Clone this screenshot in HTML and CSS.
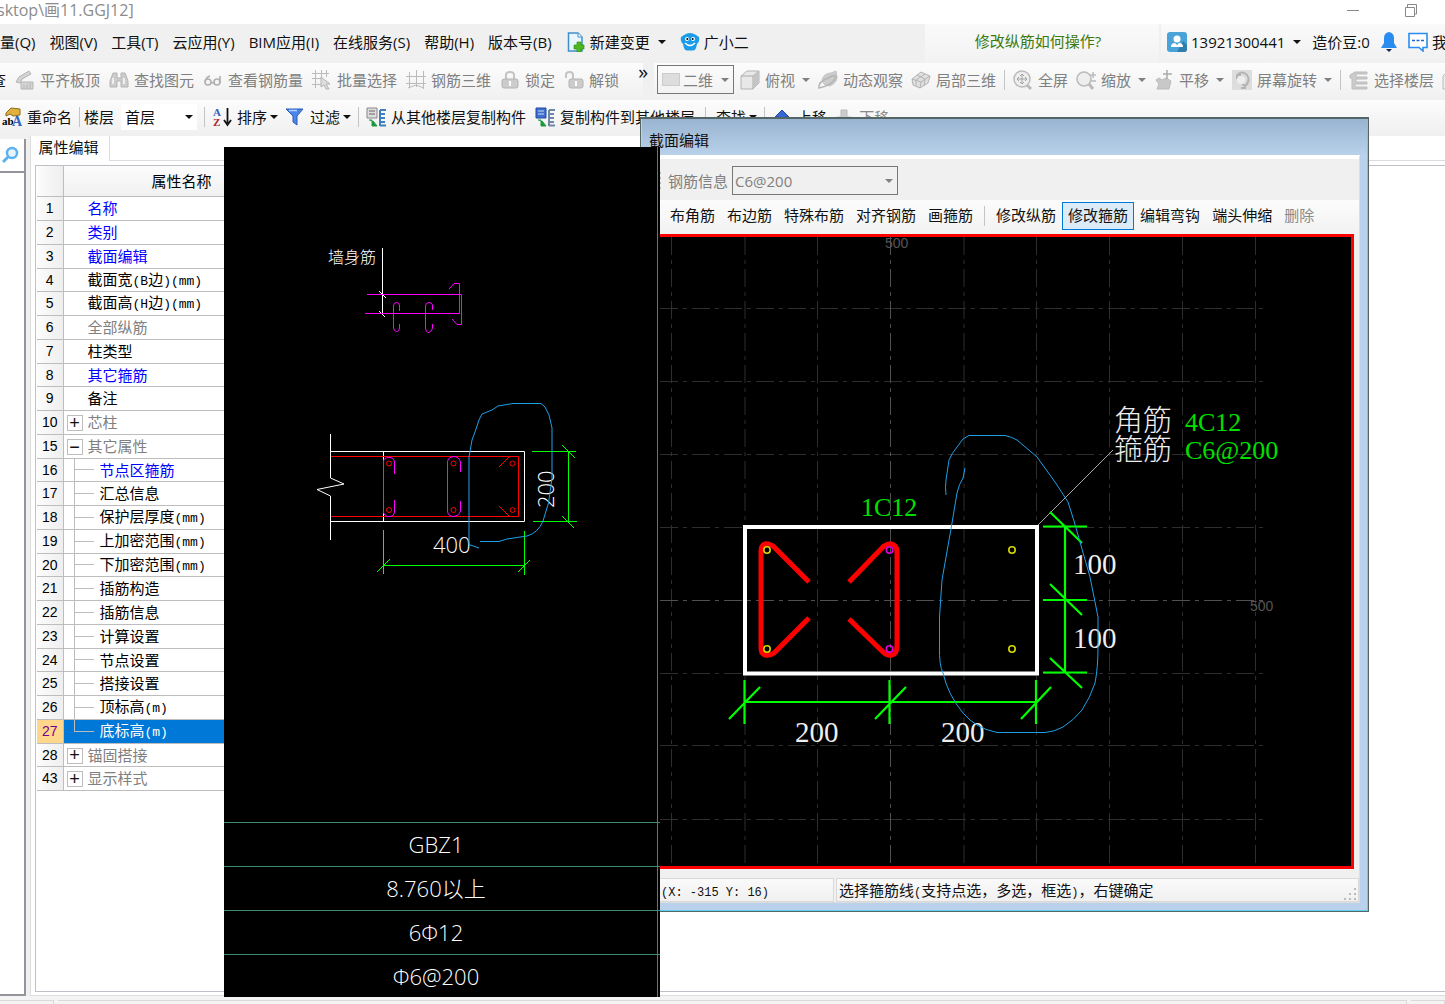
FILE: index.html
```html
<!DOCTYPE html>
<html lang="zh-CN">
<head>
<meta charset="utf-8">
<title>画11.GGJ12</title>
<link rel="stylesheet" href="styles.css">
</head>
<body>
<div class="app">
  <header class="titlebar">
    <span class="doc-title">sktop\画11.GGJ12]</span>
    <div class="win-buttons">
      <button aria-label="最小化"><svg width="14" height="14" viewBox="0 0 14 14"><path d="M1 7.5H13" stroke="#888"/></svg></button>
      <button aria-label="还原"><svg width="14" height="14" viewBox="0 0 14 14"><path d="M1.500 4.500H10.500V13.500H1.500ZM3.500 4V1.500H12.500V11H11" fill="none" stroke="#888"/></svg></button>
    </div>
  </header>

  <nav class="menubar">
    <div class="menu-items">
      <button>量(Q)</button><button>视图(V)</button><button>工具(T)</button><button>云应用(Y)</button><button>BIM应用(I)</button><button>在线服务(S)</button><button>帮助(H)</button><button>版本号(B)</button>
      <button class="ib"><svg width="20" height="20" viewBox="0 0 20 20"><path d="M2.500 1H12l4 4v14H2.500Z" fill="#eaf6ff" stroke="#3d8fca" stroke-width="1.500"/><path d="M12 1v4h4" fill="#fff" stroke="#3d8fca"/><path d="M11 10h4v3h3v4h-3v3h-4v-3H8v-4h3Z" fill="#4fb81f" stroke="#2f8f10" stroke-width=".7"/></svg>新建变更<i class="arr"></i></button>
      <button class="ib"><svg width="20" height="20" viewBox="0 0 20 20"><path d="M4 3Q10-1 16 3L19 5Q20 10 17 12L16 16Q15 19 12 18.500H8Q5 19 4 16L3 12Q0 10 1 5Z" fill="#1b9cea"/><circle cx="7" cy="7" r="2" fill="#fff"/><circle cx="13" cy="7" r="2" fill="#fff"/><circle cx="7.300" cy="7" r="1"/><circle cx="12.700" cy="7" r="1"/><path d="M5 11Q10 16 15 11" fill="none" stroke="#fff" stroke-width="1.500"/></svg>广小二</button>
    </div>
    <a class="tip" href="#help">修改纵筋如何操作?</a>
    <div class="account">
      <button class="ib"><svg width="20" height="20" viewBox="0 0 20 20"><rect width="20" height="20" rx="3" fill="#4aa3d8"/><path d="M10 20L16 9L20 13V17Q20 20 17 20Z" fill="#2f7dad"/><circle cx="10" cy="7" r="3.500" fill="#fff"/><path d="M4 15Q4 11 8 11L10 13L12 11Q16 11 16 15Z" fill="#fff"/></svg>13921300441<i class="arr"></i></button>
      <span class="beans">造价豆:0</span>
      <button aria-label="通知"><svg width="16" height="20" viewBox="0 0 16 20"><path d="M8 0Q13 1 13 6V11L16 16H0L3 11V6Q3 1 8 0Z" fill="#2b8cf0"/><path d="M5 17H11L8 20Z" fill="#125"/></svg></button>
      <button class="ib"><svg width="20" height="20" viewBox="0 0 20 20"><path d="M1 1.500H19V15.500H15V19L11 15.500H1Z" fill="#fff" stroke="#2b8cf0" stroke-width="1.600"/><path d="M4 8.500H16" stroke="#26c" stroke-width="1.500" stroke-dasharray="3 1.500"/></svg>我</button>
    </div>
  </nav>

  <div class="bars">
    <div class="toolbar dim edit-bar">
      <button class="on">查</button>
      <button><svg width="20" height="20" viewBox="0 0 20 20"><path d="M1 12L4 7L14 1L16 4L7 9L5 13ZM6 12H18V19H6ZM9 19V15M12 19V14M15 19V13" fill="#d4d4d4" stroke="#b4b4b4"/></svg>平齐板顶</button>
      <button><svg width="20" height="20" viewBox="0 0 20 20"><path d="M4 3H8V8H12V3H16L19 11V17H12V11H8V17H1V11Z" fill="#ccc" stroke="#b4b4b4"/><path d="M4 8V14M15 8V14" stroke="#eee" stroke-width="2"/></svg>查找图元</button>
      <button><svg width="20" height="20" viewBox="0 0 20 20"><g fill="none" stroke="#b0b0b0" stroke-width="1.600"><circle cx="5" cy="12" r="3"/><circle cx="14" cy="12" r="3"/><path d="M2 12Q3 7 7 6M8 12Q10 14 11 12M17 13V6"/></g></svg>查看钢筋量</button>
      <button><svg width="20" height="20" viewBox="0 0 20 20"><path d="M0 3.500H17M0 8.500H9M0 14.500H9M3.500 0V18M9.500 0V8M14.500 0V7" stroke="#bbb"/><path d="M9 7L18 14L14 14L17 19L14 19L12 15L9 17Z" fill="#ddd" stroke="#b4b4b4"/></svg>批量选择</button>
      <button><svg width="20" height="20" viewBox="0 0 20 20"><path d="M3.500 2V18M10.500 0V17M17.500 1V19M0 6.500H20M0 13.500H20M2 18L10 15L18 18" stroke="#bbb" fill="none"/></svg>钢筋三维</button>
      <button><svg width="20" height="20" viewBox="0 0 20 20"><path d="M6 9V5Q6 2 10 2T14 5V9" fill="none" stroke="#c4c4c4" stroke-width="2"/><rect x="2" y="9" width="16" height="9" rx="2" fill="#ccc" stroke="#b4b4b4"/><path d="M10 11V16" stroke="#fff" stroke-width="2"/></svg>锁定</button>
      <button><svg width="20" height="20" viewBox="0 0 20 20"><path d="M2 8V5Q2 2 5.500 2T9 5V9" fill="none" stroke="#c4c4c4" stroke-width="2"/><rect x="5" y="9" width="14" height="9" rx="2" fill="#ccc" stroke="#b4b4b4"/><path d="M12 11V16" stroke="#fff" stroke-width="2"/></svg>解锁</button>
      <button class="more" aria-label="更多">»</button>
    </div>
    <div class="toolbar dim view-bar">
      <label class="combo mode"><svg width="18" height="14" viewBox="0 0 18 14"><rect x=".5" y=".5" width="17" height="12" fill="#ddd" stroke="#ccc"/></svg><select aria-label="视图模式"><option>二维</option></select><i class="arr"></i></label>
      <button><svg width="20" height="20" viewBox="0 0 20 20"><path d="M1 6L7 1H19V13L13 19H1Z" fill="#e8e8e8" stroke="#b4b4b4"/><path d="M1 6H13V19M13 6L19 1" fill="none" stroke="#aaa"/><path d="M13 6L19 1V13L13 19Z" fill="#c4c4c4"/></svg>俯视<i class="arr"></i></button>
      <button><svg width="20" height="20" viewBox="0 0 20 20"><path d="M4 10Q6 3 13 3L18 1L19 7Q19 13 12 16L6 14Z" fill="#ccc" stroke="#c4c4c4"/><path d="M1 18Q0 12 10 8Q20 3 17 9Q12 16 1 18Z" fill="none" stroke="#b4b4b4" stroke-width="1.500"/></svg>动态观察</button>
      <button><svg width="20" height="20" viewBox="0 0 20 20"><path d="M1 9L10 2L19 6L17 13L9 18L2 15Z" fill="#e0e0e0" stroke="#b4b4b4"/><path d="M1 9L10 12L19 6M10 12L9 18M6 5L14 9L13 16M14 4L5 10V16" fill="none" stroke="#b4b4b4"/></svg>局部三维</button>
      <i class="sep"></i>
      <button><svg width="20" height="20" viewBox="0 0 20 20"><circle cx="9" cy="9" r="8" fill="#eee" stroke="#bbb" stroke-width="1.500"/><path d="M9 4V14M4 9H14M7 6L9 4L11 6M7 12L9 14L11 12M6 7L4 9L6 11M12 7L14 9L12 11" fill="none" stroke="#a4a4a4"/><path d="M14 15L18 19" stroke="#bbb" stroke-width="3"/></svg>全屏</button>
      <button><svg width="20" height="20" viewBox="0 0 20 20"><circle cx="8" cy="9" r="7" fill="#eee" stroke="#bbb" stroke-width="1.500"/><path d="M13 14L17 19" stroke="#bbb" stroke-width="3"/><path d="M17 2V8M14 5H20M14 11H20" stroke="#bbb" stroke-width="1.500"/></svg>缩放<i class="arr"></i></button>
      <button><svg width="20" height="20" viewBox="0 0 20 20"><path d="M3 19L5 14L2 10L5 8L8 10L12 8L17 11L15 19Z" fill="#c8c8c8" stroke="#bbb"/><path d="M13 0V9M9 4H18" stroke="#aaa" stroke-width="1.500"/></svg>平移<i class="arr"></i></button>
      <button><svg width="20" height="20" viewBox="0 0 20 20"><rect width="20" height="20" fill="#ddd"/><path d="M5 5Q10 0 15 5Q19 11 13 16L10 14M5 5V9M5 5H9M13 16V18H9" fill="none" stroke="#b4b4b4" stroke-width="2"/><circle cx="9" cy="10" r="4" fill="#eee"/></svg>屏幕旋转<i class="arr"></i></button>
      <i class="sep"></i>
      <button><svg width="20" height="20" viewBox="0 0 20 20"><path d="M1 5L6 2H18V4H7V7H18V9H7V12H18V14H6V17H18V19H3V8H1Z" fill="#ccc" stroke="#bbb"/></svg>选择楼层</button>
      <button aria-label="楼层"><svg width="20" height="20" viewBox="0 0 20 20"><path d="M1 6L6 1H19V19H1Z" fill="#eee" stroke="#bbb"/></svg></button>
    </div>
  </div>

  <div class="toolbar comp-bar">
    <button><svg width="20" height="20" viewBox="0 0 20 20"><path d="M4 6L9 1L18 2V8L11 9L8 7L4 9Z" fill="#e0b23c" stroke="#8a6a20"/><text x="0" y="18" font-size="11" class="sv">ab</text><text x="10" y="19" font-size="14" class="sv blue">A</text></svg>重命名</button>
    <i class="sep"></i>
    <label class="floor" for="floor">楼层</label>
    <span class="combo floors"><select id="floor"><option>首层</option></select><i class="arr"></i></span>
    <i class="sep"></i>
    <button><svg width="20" height="20" viewBox="0 0 20 20"><text x="1" y="9" font-size="11" class="sv blue">A</text><text x="1" y="19" font-size="11" class="sv red">Z</text><path d="M15.500 1V16M12 13L15.500 18L19 13" fill="none" stroke="#111" stroke-width="1.800"/></svg>排序<i class="arr"></i></button>
    <button><svg width="20" height="20" viewBox="0 0 20 20"><path d="M1 2H18L12 9V18L8 15V9Z" fill="#4a86e8" stroke="#2a5cb8"/><path d="M4 3.500H12" stroke="#b5d2ff" stroke-width="1.500"/></svg>过滤<i class="arr"></i></button>
    <i class="sep"></i>
    <button><svg width="20" height="20" viewBox="0 0 20 20"><path d="M1 1H11V11H1Z" fill="#ddd" stroke="#888"/><path d="M3 4H9M3 7H9" stroke="#666"/><path d="M3 13H6V19H11L7 14" fill="#1a9a3c" stroke="#1a9a3c"/><path d="M14 3V19M14 3H20M14 7H19M14 11H19M14 15H19M14 18.500H20" stroke="#3f7fc0" stroke-width="2"/></svg>从其他楼层复制构件</button>
    <button class="copy-to"><svg width="20" height="20" viewBox="0 0 20 20"><path d="M1 1H11V11H1Z" fill="#3d6fd0" stroke="#2448a0"/><path d="M3 4H9M3 7H9" stroke="#cde"/><path d="M3 13H6V19H11L7 14" fill="#1a9a3c" stroke="#1a9a3c"/><path d="M14 3V19M14 3H20M14 7H19M14 11H19M14 15H19M14 18.500H20" stroke="#6d87a5" stroke-width="2"/></svg>复制构件到其他楼层</button>
    <i class="sep roomy"></i>
    <button>查找<i class="arr"></i></button>
    <i class="sep"></i>
    <button><svg width="20" height="20" viewBox="0 0 20 20"><path d="M10 3L17 10H13V17H7V10H3Z" fill="#3568d4" stroke="#24489c"/></svg>上移</button>
    <button class="off"><svg width="20" height="20" viewBox="0 0 20 20"><path d="M10 17L17 10H13V3H7V10H3Z" fill="#ccc" stroke="#bbb"/></svg>下移</button>
  </div>

  <main class="work">
    <aside class="side">
      <button class="search" aria-label="搜索"><svg width="18" height="18" viewBox="0 0 18 18"><circle cx="11" cy="7" r="5" fill="#e6f5ff" stroke="#5cb2ee" stroke-width="2.500"/><path d="M7 11L2 16" stroke="#5cb2ee" stroke-width="3"/></svg></button>
      <div class="side-body"></div>
    </aside>
    <section class="props">
      <div class="tabs"><button class="tab">属性编辑</button><span class="tab-rest"></span></div>
      <div class="grid-wrap">
        <table class="grid">
          <thead><tr><th class="no"></th><th class="head">属性名称</th></tr></thead>
          <tbody>
            <tr><th>1</th><td class="key">名称</td></tr>
            <tr><th>2</th><td class="key">类别</td></tr>
            <tr><th>3</th><td class="key">截面编辑</td></tr>
            <tr><th>4</th><td>截面宽<span class="hw">(B</span>边<span class="hw">)(mm)</span></td></tr>
            <tr><th>5</th><td>截面高<span class="hw">(H</span>边<span class="hw">)(mm)</span></td></tr>
            <tr><th>6</th><td class="gray">全部纵筋</td></tr>
            <tr><th>7</th><td>柱类型</td></tr>
            <tr><th>8</th><td class="key">其它箍筋</td></tr>
            <tr><th>9</th><td>备注</td></tr>
            <tr><th>10</th><td class="gray group"><button class="exp" aria-label="展开">+</button>芯柱</td></tr>
            <tr><th>15</th><td class="gray group"><button class="exp" aria-label="折叠">−</button>其它属性</td></tr>
            <tr><th>16</th><td class="sub key">节点区箍筋</td></tr>
            <tr><th>17</th><td class="sub">汇总信息</td></tr>
            <tr><th>18</th><td class="sub">保护层厚度<span class="hw">(mm)</span></td></tr>
            <tr><th>19</th><td class="sub">上加密范围<span class="hw">(mm)</span></td></tr>
            <tr><th>20</th><td class="sub">下加密范围<span class="hw">(mm)</span></td></tr>
            <tr><th>21</th><td class="sub">插筋构造</td></tr>
            <tr><th>22</th><td class="sub">插筋信息</td></tr>
            <tr><th>23</th><td class="sub">计算设置</td></tr>
            <tr><th>24</th><td class="sub">节点设置</td></tr>
            <tr><th>25</th><td class="sub">搭接设置</td></tr>
            <tr><th>26</th><td class="sub">顶标高<span class="hw">(m)</span></td></tr>
            <tr class="selected"><th>27</th><td class="sub last">底标高<span class="hw">(m)</span></td></tr>
            <tr><th>28</th><td class="gray group"><button class="exp" aria-label="展开">+</button>锚固搭接</td></tr>
            <tr><th>43</th><td class="gray group"><button class="exp" aria-label="展开">+</button>显示样式</td></tr>
          </tbody>
        </table>
      </div>
    </section>
  </main>
  <footer class="status"><span class="cell first"></span><span class="cell grow"></span><span class="cell end"></span></footer>
</div>

<section class="dialog" aria-label="截面编辑">
  <h2 class="dlg-title">截面编辑</h2>
  <div class="dlg-body">
    <div class="dlg-info">
      <i class="grip"></i>
      <label for="rebar">钢筋信息</label>
      <span class="combo rebar"><select id="rebar"><option>C6@200</option></select><i class="arr"></i></span>
    </div>
    <div class="dlg-tools">
      <i class="grip"></i>
      <button>布角筋</button><button>布边筋</button><button>特殊布筋</button><button>对齐钢筋</button><button>画箍筋</button><i class="sep"></i><button>修改纵筋</button><button class="pressed">修改箍筋</button><button>编辑弯钩</button><button>端头伸缩</button><button class="off">删除</button>
    </div>
    <svg class="canvas" viewBox="651 237 700 629" preserveAspectRatio="xMinYMin">
      <g class="grid-lines">
        <path d="M671.500 237V866M745 237V866M817.500 237V866M964 237V866M1036.500 237V866M1109.500 237V866M1182.500 237V866M1255.500 237V866"/>
        <path d="M660 308.500H1267M660 381.500H1267M660 454.500H1267M660 527.500H1267M660 673.500H1267M660 745.500H1267M660 819.500H1267"/>
        <path class="axis" d="M890.500 237V866M660 600.500H1267"/>
      </g>
      <text class="scale" x="885" y="248">500</text>
      <text class="scale" x="1250" y="611">500</text>
      <path d="M1037 526L1113 450" stroke="#aaa"/>
      <rect x="745" y="527" width="292" height="146.500" fill="none" stroke="#fff" stroke-width="4"/>
      <g fill="none" stroke="#f00" stroke-width="5">
        <path d="M809 582L773 546Q767 542 763 545Q761 547 761 550V648Q761 654 765 655Q770 656 774 653L809 618"/>
        <path d="M849 582L884 546Q890 542 894 545Q897 547 897 552V646Q897 654 892 655Q887 656 883 652L849 619"/>
      </g>
      <g fill="none" stroke="#d6d600" stroke-width="1.600"><circle cx="767" cy="550" r="3.200"/><circle cx="767" cy="649" r="3.200"/><circle cx="1012" cy="550" r="3.200"/><circle cx="1012" cy="649" r="3.200"/></g>
      <g fill="none" stroke="#e000e0" stroke-width="1.600"><circle cx="889.500" cy="550" r="3.200"/><circle cx="889.500" cy="649" r="3.200"/></g>
      <g fill="none" stroke="#0f0" stroke-width="2.200">
        <path d="M745 702H1036M744.500 680V724M889.500 680V724M1036 680V724M729 719L760 687M875 719L906 687M1021 719L1051 687"/>
        <path d="M1065 526V673M1043 526.500H1087M1043 600H1087M1043 672.500H1087M1050 512L1082 543M1050 584L1082 615M1050 658L1082 688"/>
      </g>
      <g class="dims">
        <text x="795" y="742">200</text><text x="941" y="742">200</text><text x="1073" y="574">100</text><text x="1073" y="648">100</text>
        <text x="1114" y="431">角筋</text><text x="1114" y="460">箍筋</text>
      </g>
      <g class="bar-tag"><text x="861" y="516">1C12</text><text x="1185" y="431">4C12</text><text x="1185" y="459">C6@200</text></g>
      <path d="M946 495Q945 487 946 480L949 460Q952 453 957 447L963 439L969 435.500H1005Q1012 437 1017 440L1037 457L1055 482L1068 502Q1074 520 1080 542L1090 577L1098 617V647Q1098 668 1095 683Q1090 698 1082 710Q1074 720 1063 727Q1054 732 1045 732.500H997Q985 730 977 725Q970 721 963 713Q948 695 943 673Q939 665 939.500 647V617L942 580L952 523L957 493Q959 484 963 478L965 468" fill="none" stroke="#1fa0e6"/>
    </svg>
    <div class="dlg-status">
      <span class="cell pos"><span class="hw">(X: -315 Y: 16)</span></span>
      <span class="cell msg">选择箍筋线<span class="hw">(</span>支持点选，多选，框选<span class="hw">)</span>，右键确定</span>
      <svg class="size-grip" width="14" height="14" viewBox="0 0 14 14"><path d="M10 1h2v2h-2ZM10 6h2v2h-2ZM10 11h2v2h-2ZM5 6h2v2H5ZM5 11h2v2H5ZM0 11h2v2H0Z" fill="#bbb"/></svg>
    </div>
  </div>
</section>

<section class="cad" aria-label="GBZ1">
  <svg class="cad-draw" viewBox="224 147 433 675" preserveAspectRatio="xMinYMin">
    <text class="cad-cn" x="328" y="263">墙身筋</text>
    <path d="M382.500 248V314M379 291L386 298M379 311L385 317" stroke="#fff" fill="none"/>
    <g fill="none" stroke="#f0f">
      <path d="M367 294.500H461.500V324.500H457L452 319M365 313.500H459.500V283.500H454L449 289"/>
      <path d="M399.500 311V305Q399 302.500 396.500 302.500Q393.500 302.500 393.500 306V328Q394 331.500 396.500 331.500Q399.500 331.500 399.500 328V324M432.500 310V305Q432 302.500 429 302.500Q425.500 302.500 425.500 306V328Q426 332.500 429 332.500Q432 331 432.500 328V324"/>
    </g>
    <path d="M330.500 434V478L344 484L317 489.500L330.500 496V540M331 451.500H524.500V521.500H331M383.500 452V461M383.500 513V521" fill="none" stroke="#fff"/>
    <path d="M331 456.500H518.500V516.500H331M499 467L509 457M499 506L509 516" fill="none" stroke="#f00"/>
    <g fill="none" stroke="#f0f">
      <path d="M394.500 474V462Q394 457.500 389 457.500Q384 457.500 383.500 461V512Q384 516.500 389 516.500Q394 516.500 394.500 512V500M460.500 472V462Q459 456.500 453.500 456.500Q448 457 447.500 462V511Q448 516.500 453.500 516.500Q459 516 460.500 511V501"/>
    </g>
    <g fill="none" stroke="#f00"><circle cx="389" cy="463.500" r="2.500"/><circle cx="453.500" cy="463.500" r="2.500"/><circle cx="512.500" cy="463.500" r="2.500"/><circle cx="389" cy="510" r="2.500"/><circle cx="453.500" cy="510" r="2.500"/><circle cx="512.500" cy="510" r="2.500"/></g>
    <path d="M383.500 530V574M524.500 531V575M383.500 565.500H524.500M377 572L390 559M518 572L530 560M532 451.500H576M533 521.500H577M568.500 451.500V521.500M562 445L575 458M562 516L574 528" fill="none" stroke="#0f0"/>
    <text class="cad-num" x="433" y="553">400</text>
    <text class="cad-num" transform="translate(554 508) rotate(-90)">200</text>
    <path d="M479 548L469 544.500V457L472 440L475 432L479 420L482 414L492 410L498 406L513 403.500H541L545 407L549 415L552 428V478L548.500 503L543 521Q538 533 527 536L507 539L499 541.500H480" fill="none" stroke="#1fa0e6"/>
  </svg>
  <div class="cad-row">GBZ1</div>
  <div class="cad-row">8.760以上</div>
  <div class="cad-row">6Φ12</div>
  <div class="cad-row">Φ6@200</div>
</section>
</body>
</html>
```
FILE: styles.css
```css
* { box-sizing: border-box; }
body { margin: 0; overflow: hidden; background: #fff; color: #111; font: 15px/20px "Open Sans", "Noto Sans CJK SC", sans-serif; }
button { margin: 0; padding: 0; border: 0; background: none; color: inherit; font: inherit; white-space: nowrap; }
svg { display: block; flex: none; }
select { appearance: none; border: 0; background: none; color: inherit; font: inherit; padding: 0; opacity: 1; }
.app { display: flex; flex-direction: column; height: 100vh; }

.titlebar { display: flex; justify-content: space-between; align-items: center; height: 24px; padding-bottom: 4px; color: #8c8c8c; font-size: 16px; }
.doc-title { margin-left: -3px; }
.win-buttons { display: flex; gap: 44px; padding-right: 27px; }

.menubar { display: flex; align-items: stretch; height: 39px; background: #f0f0f0; }
.menu-items { display: flex; align-items: center; gap: 14px; flex: 1; padding-bottom: 4px; }
.ib { display: flex; align-items: center; gap: 4px; }
.arr { flex: none; border: 4px solid transparent; border-top-color: currentColor; border-bottom: 0; margin-left: 4px; }
.tip { flex: none; width: 234px; padding: 7px 8px 0 0; text-align: center; color: #3a7a10; text-decoration: none; background: linear-gradient(#fafafa, #f2f2f2); }
.account { display: flex; align-items: center; gap: 11px; flex: none; width: 284px; padding: 0 0 4px 6px; margin-left: 2px; background: linear-gradient(#fafafa, #f0f0f0); overflow: hidden; white-space: nowrap; }
.account > * { flex: none; }

.bars { display: flex; height: 37px; background: #f0f0f0; }
.toolbar { display: flex; align-items: center; gap: 9px; padding-bottom: 4px; background: linear-gradient(#fcfcfc, #f0f0f0); }
.toolbar button { display: flex; align-items: center; gap: 5px; flex: none; }
.dim { color: #808080; }
.dim .on, .dim .more { color: #111; }
.edit-bar { flex: none; width: 652px; margin-left: -9px; margin-right: 11px; }
.dim .more { margin: 0 0 16px 10px; font-size: 20px; }
.view-bar { flex: 1; overflow: hidden; gap: 8px; padding-left: 3px; }
.view-bar button .arr { margin-left: 2px; }
.sep { flex: none; width: 1px; height: 20px; background: #c4c4c4; }
.combo { display: flex; align-items: center; justify-content: space-between; flex: none; }
.combo .arr { margin-right: 4px; }
.mode { width: 77px; height: 29px; margin-right: -2px; padding-left: 4px; border: 1px solid #777; }
.comp-bar { flex: none; gap: 7px; height: 35px; padding: 0 0 2px 2px; }
.comp-bar button .arr { margin-left: -2px; }
.comp-bar .copy-to { margin-left: 2px; }
.comp-bar .roomy { margin: 0 3px; }
.floor { margin-left: -3px; }
.floors { width: 76px; height: 26px; padding-left: 4px; background: #fff; }
.off { color: #8a8a8a; }
.sv { font-family: "Liberation Serif", serif; font-weight: bold; }
.blue { fill: #2f5fc0; }
.red { fill: #b02828; }

.work { display: flex; flex: 1; gap: 4px; padding-top: 1px; min-height: 0; background: #f0f0f0; }
.side { display: flex; flex-direction: column; flex: none; width: 26px; padding-top: 3px; background: #f0f0f0; }
.side > * { border-right: 2px solid #94949c; background: #fff; }
.search { height: 34px; border-bottom: 2px solid #94949c; padding-left: 1px; }
.side-body { flex: 1; border-bottom: 2px solid #94949c; }
.props { display: flex; flex-direction: column; flex: 1; min-width: 0; background: #fff; border-left: 1px solid #ddd; border-bottom: 1px solid #ddd; }
.tabs { display: flex; flex: none; height: 25px; }
.tab { width: 79px; padding: 0 3px 4px 0; border-right: 1px solid #ddd; }
.tab-rest { flex: 1; border-bottom: 1px solid #ddd; }
.grid-wrap { flex: 1; min-height: 0; margin: 4px 0 3px 4px; border: 1px solid #bfbfc8; border-right: 0; overflow: hidden; font-family: "Liberation Sans", "Noto Sans CJK SC", sans-serif; }
.grid { border-collapse: collapse; table-layout: fixed; width: 600px; margin-left: 1px; color: #000; line-height: 16px; }
.grid th, .grid td { height: 24px; padding: 2px 0 0; font-weight: normal; border-bottom: 1px solid #bdbdbd; text-align: left; }
.grid tbody tr:nth-child(4n) > * { height: 23px; }
.grid th.no { width: 26px; }
.grid thead th { height: 30px; background: linear-gradient(#fcfcfc, #f0f0f0); }
.grid th:first-child { padding: 0; border-right: 1px solid #bdbdbd; background: linear-gradient(90deg, #fcfcfc, #eee); text-align: center; font-size: 14px; }
.grid th.head { padding-left: 88px; }
.grid td { padding-left: 24px; }
.grid td.key { color: #00f; }
.grid td.gray { color: #808080; }
.grid td.group { padding-left: 3px; }
.exp { width: 16px; height: 16px; margin-right: 5px; border: 1px solid #bdbdbd; color: #111; font-size: 18px; line-height: 13px; vertical-align: top; }
.grid td.sub { padding-left: 36px; background: linear-gradient(#bdbdbd, #bdbdbd) 10px 0 / 1px 100% no-repeat, linear-gradient(#bdbdbd, #bdbdbd) 10px 50% / 20px 1px no-repeat; }
.grid .selected td { color: #fff; background-color: #0078d7; }
.grid td.last { background-size: 1px 50%, 20px 1px; }
.grid .selected th:first-child { background: #ffd78c; color: #708; }
.hw { font-family: "Liberation Mono", monospace; font-size: 13px; }
.status { display: flex; gap: 4px; flex: none; height: 8px; padding-top: 4px; background: #f4f4f4; }
.cell { border: 1px solid #d9d9d9; }
.status .cell { border-bottom: 0; border-left: 0; }
.status .first { width: 54px; }
.status .grow { flex: 1; }
.status .end { width: 34px; }

.dialog { position: absolute; left: 640px; top: 117px; width: 729px; display: flex; flex-direction: column; padding: 0 8px 8px; border: 1px solid #566; border-top-width: 2px; box-shadow: inset -1px -1px #5fd0ee; background: #b9d1ea; }
.dlg-title { height: 36px; margin: 0 -7px; padding: 11px 0 0 7px; font-size: 15px; font-weight: normal; line-height: 20px; background: linear-gradient(#99b4d1, #b9d1ea); }
.dlg-body { background: #f0f0f0; border: 1px solid #ddd; border-top: 2px solid #fff; }
.dlg-info { display: flex; align-items: center; gap: 4px; height: 43px; padding: 2px 0 0 9px; color: #808080; background: #f0f0f0; border-top: 2px solid #fff; }
.grip { flex: none; width: 2px; height: 18px; margin-right: 4px; background: repeating-linear-gradient(#bbb 0 2px, transparent 2px 5px); }
.dlg-info .grip { margin-right: 3px; }
.rebar { width: 166px; height: 29px; padding-left: 2px; border: 1px solid #777; }
.dlg-tools { display: flex; align-items: center; height: 34px; padding: 0 0 2px 8px; background: linear-gradient(#fcfcfc, #f2f2f2); }
.dlg-tools button { padding: 0 5px 2px; border: 1px solid transparent; height: 28px; }
.dlg-tools .sep { margin: 0 5px; }
.dlg-tools .pressed { border-color: #0078d7; background: #dcebf8; }
.canvas { width: 706px; border: 3px solid #f00; margin-left: -2px; background: #000; }
.grid-lines { fill: none; stroke: #2e2e2e; stroke-dasharray: 18 5 4 5; }
.axis { stroke: #505050; }
.scale { fill: #555; font: 14px "Liberation Sans", sans-serif; }
.dims text { fill: #eee; font: 29px "Liberation Serif", "Noto Sans CJK SC", serif; font-weight: 300; }
.bar-tag text { fill: #00e000; font: 26px "Liberation Serif", serif; }
.dlg-status { display: flex; align-items: stretch; gap: 2px; height: 33px; padding-top: 9px; position: relative; }
.dlg-status .cell { background: linear-gradient(#fafafa, #f0f0f0); line-height: 22px; padding-left: 2px; }
.pos { width: 184px; }
.dlg-status .pos { padding-left: 10px; }
.msg { flex: 1; }
.dlg-status .hw { font-size: 12px; }
.size-grip { position: absolute; right: 1px; bottom: 1px; }

.cad { position: absolute; left: 224px; top: 147px; width: 436px; display: flex; flex-direction: column; background: linear-gradient(#3d8b70, #3d8b70) 433px 0 / 1px 100% no-repeat #000; }
.cad-draw { width: 433px; }
.cad-cn { fill: #fff; font: 300 16px "Noto Sans CJK SC", sans-serif; }
.cad-num { fill: #fff; font: 300 22px "Open Sans", sans-serif; }
.cad-row { height: 44px; padding-right: 12px; border-top: 1px solid #3d8b70; color: #fff; text-align: center; font: 300 22px/43px "Open Sans", "Noto Sans CJK SC", sans-serif; }
.cad-row:last-child { height: 43px; }
```
